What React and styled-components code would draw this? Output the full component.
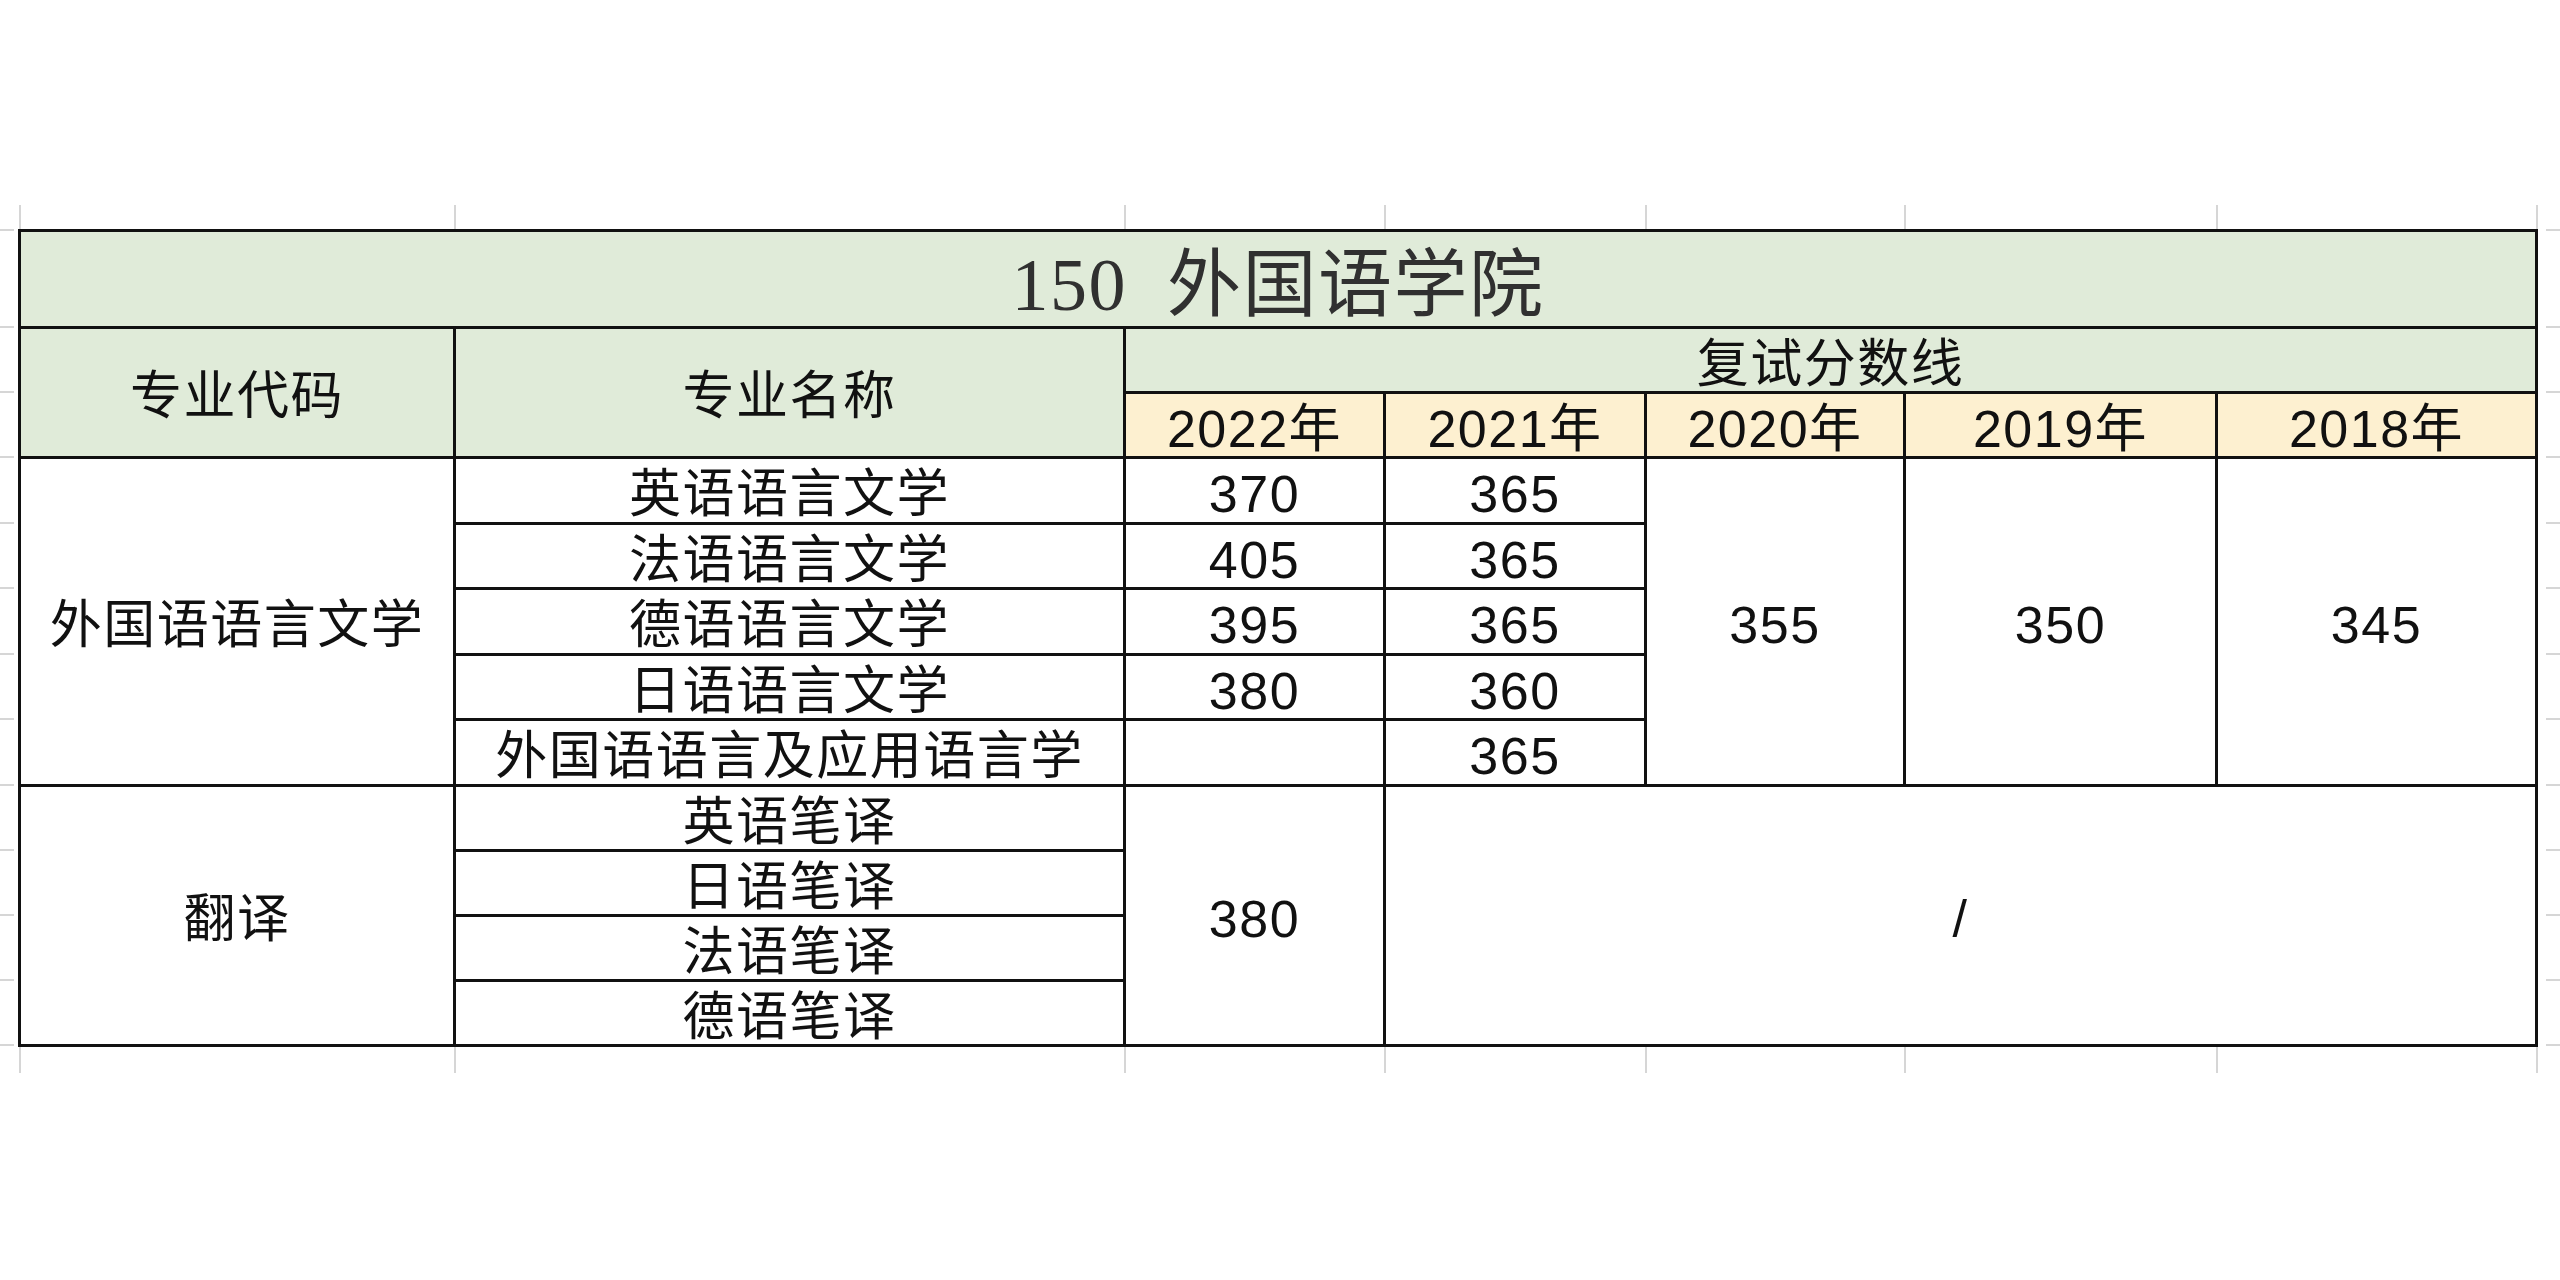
import React from "react";
import styled, { createGlobalStyle } from "styled-components";

const GlobalStyle = createGlobalStyle`
  html, body { margin: 0; padding: 0; background: #ffffff; }
  body { font-family: "Liberation Sans", "Noto Sans CJK SC", sans-serif; }
`;

const COLS = [432, 667, 257, 258, 256, 309, 317];
const ROWS = [94, 62, 62, 63, 62, 63, 62, 63, 62, 62, 62, 62];
const LINE = 3;
const GRID_LINE = "#d6d6d6";

const Page = styled.div`
  width: 2560px;
  height: 1280px;
  padding-top: 205px;
  box-sizing: border-box;
  display: flex;
  flex-direction: column;
`;

const Strip = styled.div`
  display: grid;
  grid-template-columns: 19px 435px 670px 260px 261px 259px 312px 320px 1fr;
  height: ${(p) => p.$h}px;
`;

const StripCell = styled.div`
  border-left: ${(p) => (p.$first ? "none" : `2px solid ${GRID_LINE}`)};
`;

const Middle = styled.div`
  display: flex;
  align-items: flex-start;
`;

const Gutter = styled.div`
  display: flex;
  flex-direction: column;
  align-items: ${(p) => (p.$right ? "flex-end" : "flex-start")};
  width: ${(p) => p.$w}px;
  flex: ${(p) => (p.$right ? "1" : "none")};
`;

const Tick = styled.div`
  box-sizing: border-box;
  width: 14px;
  height: ${(p) => p.$h}px;
  border-top: 2px solid ${GRID_LINE};
`;

const Table = styled.div`
  display: grid;
  box-sizing: border-box;
  width: 2520px;
  padding: ${LINE}px;
  gap: ${LINE}px;
  background: #111111;
  grid-template-columns: ${COLS.map((c) => c + "px").join(" ")};
  grid-template-rows: ${ROWS.map((r) => r + "px").join(" ")};
`;

const Cell = styled.div`
  grid-column: ${(p) => p.$col} / span ${(p) => p.$cs || 1};
  grid-row: ${(p) => p.$row} / span ${(p) => p.$rs || 1};
  background: ${(p) => p.$bg || "#ffffff"};
  display: flex;
  align-items: center;
  justify-content: center;
  box-sizing: border-box;
  padding-top: 7px;
  font-family: "Liberation Sans", "Noto Sans CJK SC", sans-serif;
  font-size: 52px;
  letter-spacing: 1.5px;
  line-height: 1;
  color: #111111;
  white-space: nowrap;
`;

const TitleCell = styled(Cell)`
  padding-top: 12px;
  font-family: "Liberation Serif", "Noto Sans CJK SC", serif;
  font-size: 74px;
  letter-spacing: 1.5px;
  color: #303030;
  white-space: pre;
`;

const GREEN = "#e0ebd9";
const PEACH = "#fdf0d0";

const years = ["2022年", "2021年", "2020年", "2019年", "2018年"];

const literature = [
  { name: "英语语言文学", y22: "370", y21: "365" },
  { name: "法语语言文学", y22: "405", y21: "365" },
  { name: "德语语言文学", y22: "395", y21: "365" },
  { name: "日语语言文学", y22: "380", y21: "360" },
  { name: "外国语语言及应用语言学", y22: "", y21: "365" },
];

const translation = ["英语笔译", "日语笔译", "法语笔译", "德语笔译"];

const stripCols = Array.from({ length: 9 }, (_, i) => i);

function GridStrip({ h }) {
  return (
    <Strip $h={h}>
      {stripCols.map((i) => (
        <StripCell key={i} $first={i === 0} />
      ))}
    </Strip>
  );
}

function Ticks({ right, w }) {
  return (
    <Gutter $right={right} $w={w}>
      {ROWS.map((r, i) => (
        <Tick key={i} $h={r + LINE} />
      ))}
      <Tick $h={2} />
    </Gutter>
  );
}

export default function App() {
  return (
    <>
      <GlobalStyle />
      <Page>
        <GridStrip h={24} />
        <Middle>
          <Ticks w={18} />
          <Table>
            <TitleCell $col={1} $row={1} $cs={7} $bg={GREEN}>
              {"150  外国语学院"}
            </TitleCell>

            <Cell $col={1} $row={2} $rs={2} $bg={GREEN}>专业代码</Cell>
            <Cell $col={2} $row={2} $rs={2} $bg={GREEN}>专业名称</Cell>
            <Cell $col={3} $row={2} $cs={5} $bg={GREEN}>复试分数线</Cell>
            {years.map((y, i) => (
              <Cell key={y} $col={3 + i} $row={3} $bg={PEACH}>
                {y}
              </Cell>
            ))}

            <Cell $col={1} $row={4} $rs={5}>外国语语言文学</Cell>
            {literature.map((m, i) => (
              <React.Fragment key={m.name}>
                <Cell $col={2} $row={4 + i}>{m.name}</Cell>
                <Cell $col={3} $row={4 + i}>{m.y22}</Cell>
                <Cell $col={4} $row={4 + i}>{m.y21}</Cell>
              </React.Fragment>
            ))}
            <Cell $col={5} $row={4} $rs={5}>355</Cell>
            <Cell $col={6} $row={4} $rs={5}>350</Cell>
            <Cell $col={7} $row={4} $rs={5}>345</Cell>

            <Cell $col={1} $row={9} $rs={4}>翻译</Cell>
            {translation.map((t, i) => (
              <Cell key={t} $col={2} $row={9 + i}>{t}</Cell>
            ))}
            <Cell $col={3} $row={9} $rs={4}>380</Cell>
            <Cell $col={4} $row={9} $rs={4} $cs={4}>/</Cell>
          </Table>
          <Ticks right w={22} />
        </Middle>
        <GridStrip h={26} />
      </Page>
    </>
  );
}
